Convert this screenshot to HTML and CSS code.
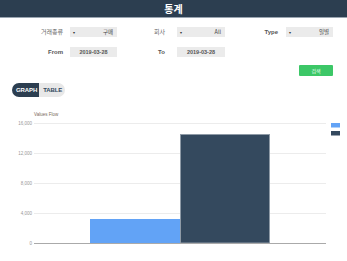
FILE: index.html
```html
<!DOCTYPE html>
<html lang="ko">
<head>
  <meta charset="UTF-8">
  <title>통계</title>
  <link rel="stylesheet" href="styles.css">
</head>
<body>
  <header class="topbar">통계</header>

  <div class="filters">
    <label class="lbl">거래종류</label>
    <div class="select"><span class="caret">▾</span><span>구매</span></div>
    <label class="lbl lbl-mid">회사</label>
    <div class="select"><span class="caret">▾</span><span>All</span></div>
    <label class="lbl lbl-last en">Type</label>
    <div class="select"><span class="caret">▾</span><span>일별</span></div>

    <label class="lbl en">From</label>
    <div class="date">2019-03-28</div>
    <label class="lbl lbl-mid en">To</label>
    <div class="date">2019-03-28</div>
  </div>

  <div class="actions">
    <button class="search-btn">검색</button>
  </div>

  <div class="toggle">
    <span class="tab active">GRAPH</span><span class="tab">TABLE</span>
  </div>

  <!-- chart -->
  <svg class="chart" width="347" height="153" viewBox="0 0 347 153">
    <text x="34" y="8" class="chart-title">Values Flow</text>
    <g class="grid">
      <line x1="34" y1="15.5" x2="326" y2="15.5"/>
      <line x1="34" y1="45.5" x2="326" y2="45.5"/>
      <line x1="34" y1="75.5" x2="326" y2="75.5"/>
      <line x1="34" y1="105.5" x2="326" y2="105.5"/>
    </g>
    <g class="ylabels">
      <text x="32" y="17">16,000</text>
      <text x="32" y="47">12,000</text>
      <text x="32" y="77">8,000</text>
      <text x="32" y="107">4,000</text>
      <text x="32" y="137">0</text>
    </g>
    <rect x="90" y="111" width="90" height="24" fill="#62a3f6"/>
    <rect x="180.5" y="26.5" width="89" height="108.5" fill="#34495e" stroke="#8e9aa6" stroke-width="1"/>
    <line x1="34" y1="135.5" x2="326" y2="135.5" class="axis"/>
    <rect x="331" y="15" width="9" height="4.5" fill="#62a3f6"/>
    <rect x="331" y="23" width="9" height="4.5" fill="#34495e"/>
  </svg>
</body>
</html>
```

FILE: styles.css
```css
body { margin: 0; background: #fff; font-family: "Liberation Sans", "Noto Sans CJK KR", sans-serif; color: #444; overflow: hidden; }
.topbar { height: 17px; line-height: 17px; background: #2c3e50; border-bottom: 1px solid #9aa5b1; color: #fff; text-align: center; font-weight: bold; font-size: 10px; font-family: "Noto Sans CJK KR", sans-serif; }
.filters { display: grid; grid-template-columns: 70px 47px 60px 48px 61px 47px; grid-auto-rows: 10px; row-gap: 10px; margin-top: 9px; }
.lbl { font-size: 6px; line-height: 10px; text-align: right; padding-right: 7px; color: #666; font-family: "Noto Sans CJK KR", "Liberation Sans", sans-serif; }
.lbl.en { font-family: "Liberation Sans", sans-serif; font-weight: bold; color: #555; }
.lbl-mid { padding-right: 12px; }
.lbl-last { padding-right: 8px; }
.select, .date { background: #ebebeb; font-size: 5.5px; line-height: 10px; color: #444; font-family: "Noto Sans CJK KR", "Liberation Sans", sans-serif; }
.select { display: flex; justify-content: space-between; padding: 0 4px 0 3px; }
.caret { font-size: 4px; color: #333; }
.date { text-align: center; font-weight: bold; font-family: "Liberation Sans", sans-serif; color: #555; }
.actions { display: flex; justify-content: flex-end; padding-right: 14px; margin-top: 8px; }
.search-btn { width: 34px; height: 11px; padding: 0; border: none; border-radius: 1px; background: #3cc767; color: #e8fff0; font-size: 5px; font-family: "Noto Sans CJK KR", sans-serif; }
.toggle { display: flex; margin: 7px 0 0 12px; height: 14px; }
.tab { display: block; line-height: 14px; font-size: 6px; font-weight: bold; padding: 0 3px 0 4px; background: #e8e8e8; color: #34495e; border-radius: 0 7px 7px 0; letter-spacing: -0.1px; }
.tab.active { background: #2c3e50; color: #fff; border-radius: 7px 0 0 7px; padding: 0 2px 0 4px; }
.chart { display: block; margin-top: 11px; }
.chart-title { font-size: 4.5px; fill: #7a6a5a; font-family: "Liberation Sans", sans-serif; }
.grid line { stroke: #ececec; stroke-width: 1; }
.axis { stroke: #aaa; stroke-width: 1; }
.ylabels text { font-size: 4.5px; fill: #999; text-anchor: end; font-family: "Liberation Sans", sans-serif; }
```
